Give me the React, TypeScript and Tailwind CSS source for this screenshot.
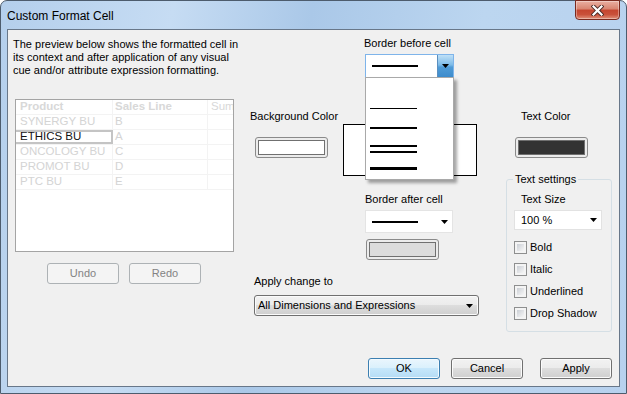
import React from "react";

function Arrow() {
  return (
    <svg width="7" height="4" viewBox="0 0 7 4" className="block">
      <path d="M0 0H7L3.5 4Z" fill="#000" />
    </svg>
  );
}

function Checkbox({ label }: { label: string }) {
  return (
    <div className="flex items-center h-[13px] gap-[3px]">
      <span className="w-[13px] h-[13px] border border-[#8e8f8f] bg-[#f4f4f4] p-[2px] shrink-0">
        <span className="block w-full h-full bg-[linear-gradient(135deg,#cbcfd5,#f6f6f6)]" />
      </span>
      <span className="leading-[13px]">{label}</span>
    </div>
  );
}

function Swatch({ inner }: { inner: string }) {
  return (
    <div className="w-[73px] h-[21px] rounded-[3px] border border-[#8a8a8a] bg-[#ececec] p-[2px]">
      <div className={`w-full h-full border border-[#707070] ${inner}`} />
    </div>
  );
}

const btn =
  "h-[21px] w-[72px] rounded-[3px] border border-[#707070] bg-[linear-gradient(180deg,#f2f2f2_0%,#ebebeb_50%,#dddddd_50%,#cfcfcf_100%)] shadow-[inset_0_0_0_1px_#fbfbfb] flex items-center justify-center text-black";

const rows = [
  ["SYNERGY BU", "B"],
  ["ETHICS BU", "A"],
  ["ONCOLOGY BU", "C"],
  ["PROMOT BU", "D"],
  ["PTC BU", "E"],
];

export default function App() {
  return (
    <div className="w-[627px] h-[394px] overflow-hidden bg-white">
      <div className="w-full h-full flex flex-col border border-[#4d5c6d] rounded-t-[7px] bg-[linear-gradient(100deg,#b4cfec_0%,#c6dcf3_25%,#aac8e8_45%,#bcd6f0_70%,#b7d1ee_100%)] font-['Liberation_Sans',Arial,sans-serif] text-[11px] text-black">
        {/* title bar */}
        <div className="h-[28px] flex items-start shrink-0">
          <div className="pl-[6px] pt-[8px] text-[12px] leading-[14px] text-black">
            Custom Format Cell
          </div>
          <div className="ml-auto mr-[6px] mt-[-1px] w-[45px] h-[20px] rounded-b-[4px] border border-[#7a2a1f] bg-[linear-gradient(180deg,#eab0a2_0%,#d88470_45%,#c5452f_50%,#c9513a_75%,#e0917b_100%)] shadow-[inset_0_0_0_1px_rgba(255,255,255,0.35)] flex items-center justify-center">
            <svg width="13" height="11" viewBox="0 0 13 11">
              <path d="M2.5 1.5L10.5 9.5M10.5 1.5L2.5 9.5" stroke="#4a2a26" strokeWidth="4" strokeLinecap="square" />
              <path d="M2.5 1.5L10.5 9.5M10.5 1.5L2.5 9.5" stroke="#ffffff" strokeWidth="2.2" strokeLinecap="square" />
            </svg>
          </div>
        </div>

        {/* client */}
        <div className="mx-[6px] h-[358px] border border-[#687789] bg-[#f0f0f0] flex flex-col shrink-0">
          <div className="h-[328px] flex shrink-0">
            {/* left column */}
            <div className="w-[232px] flex flex-col pl-[5px] pt-[8px] shrink-0">
              <p className="leading-[13px] whitespace-nowrap">
                The preview below shows the formatted cell in
                <br />
                its context and after application of any visual
                <br />
                cue and/or attribute expression formatting.
              </p>
              <div className="mt-[22px] ml-[2px] w-[219px] h-[153px] border border-[#a4a4a4] bg-white overflow-hidden text-[11.5px]">
                <div className="flex h-[15px] items-center text-[#d8d8d8] font-bold border-b border-[#f3f3f3]">
                  <div className="w-[97px] pl-[4px] shrink-0 border-r border-[#f3f3f3] h-full flex items-center">Product</div>
                  <div className="w-[95px] pl-[2px] shrink-0 border-r border-[#f3f3f3] h-full flex items-center">Sales Line</div>
                  <div className="pl-[3px] font-normal whitespace-nowrap overflow-hidden">Sum</div>
                </div>
                {rows.map(([a, b]) => {
                  const sel = a === "ETHICS BU";
                  return (
                    <div key={a} className="flex h-[15px] items-center border-b border-[#f3f3f3]">
                      <div
                        className={`w-[97px] pl-[4px] shrink-0 h-full flex items-center whitespace-nowrap ${
                          sel
                            ? "text-[#111] border-y-2 border-r-2 border-[#c4c4c4]"
                            : "text-[#d4d4d4] border-r border-[#f3f3f3]"
                        }`}
                      >
                        {a}
                      </div>
                      <div className="w-[95px] pl-[2px] shrink-0 h-full flex items-center text-[#d4d4d4] border-r border-[#f3f3f3]">
                        {b}
                      </div>
                    </div>
                  );
                })}
              </div>
              <div className="flex mt-[11px] ml-[34px] gap-[10px]">
                <div className="h-[21px] w-[72px] rounded-[3px] border border-[#adb2b5] bg-[#f4f4f4] text-[#838383] flex items-center justify-center">Undo</div>
                <div className="h-[21px] w-[72px] rounded-[3px] border border-[#adb2b5] bg-[#f4f4f4] text-[#838383] flex items-center justify-center">Redo</div>
              </div>
            </div>

            {/* center block */}
            <div className="w-[266px] pl-[10px] flex flex-col shrink-0">
              <div className="flex">
                <div className="w-[93px] pt-[80px] flex flex-col shrink-0">
                  <div className="leading-[13px] whitespace-nowrap">Background Color</div>
                  <div className="mt-[14px] ml-[5px]">
                    <Swatch inner="bg-white" />
                  </div>
                </div>
                <div className="w-[134px] pt-[7px] flex flex-col shrink-0">
                  <div className="ml-[21px] leading-[13px] whitespace-nowrap">Border before cell</div>
                  <div className="relative mt-[4px] ml-[22px] w-[89px] h-[24px] border border-[#7eb4ea] bg-white flex items-center">
                    <div className="ml-[6px] w-[46px] h-[2px] bg-black" />
                    <div className="ml-auto w-[16px] h-full border-l border-[#5a8fc0] bg-[linear-gradient(180deg,#bfe0f7_0%,#7dbbe8_45%,#4f9bd6_55%,#3d8ccc_100%)] flex items-center justify-center">
                      <Arrow />
                    </div>
                    <div className="absolute left-[-1px] top-[22px] w-[89px] h-[103px] z-10 border border-[#a9a9a9] bg-white shadow-[3px_3px_3px_rgba(0,0,0,0.35)] flex flex-col pl-[4px]">
                      <div className="mt-[30px] w-[47px] h-[1px] bg-black" />
                      <div className="mt-[18px] w-[47px] h-[2px] bg-black" />
                      <div className="mt-[16px] w-[47px] h-[2px] bg-black" />
                      <div className="mt-[4px] w-[47px] h-[2px] bg-black" />
                      <div className="mt-[14px] w-[47px] h-[3px] bg-black" />
                    </div>
                  </div>
                  <div className="mt-[46px] w-[134px] h-[52px] border border-black bg-white" />
                  <div className="mt-[17px] ml-[22px] leading-[13px] whitespace-nowrap">Border after cell</div>
                  <div className="mt-[4px] ml-[22px] w-[88px] h-[23px] border border-[#e4e4e4] bg-white flex items-center">
                    <div className="ml-[6px] w-[46px] h-[2px] bg-black" />
                    <div className="ml-auto mr-[4px]">
                      <Arrow />
                    </div>
                  </div>
                  <div className="mt-[6px] ml-[23px]">
                    <Swatch inner="bg-[#dcdcdc]" />
                  </div>
                </div>
              </div>
              <div className="mt-[15px] ml-[4px] leading-[13px]">Apply change to</div>
              <div className="mt-[7px] ml-[4px] w-[225px] h-[21px] rounded-[3px] border border-[#707070] bg-[linear-gradient(180deg,#f2f2f2_0%,#ebebeb_50%,#dddddd_50%,#cfcfcf_100%)] shadow-[inset_0_0_0_1px_#fbfbfb] flex items-center pl-[3px] pr-[5px]">
                <span>All Dimensions and Expressions</span>
                <span className="ml-auto">
                  <Arrow />
                </span>
              </div>
            </div>

            {/* right column */}
            <div className="w-[106px] pt-[80px] flex flex-col shrink-0">
              <div className="pl-[15px] leading-[13px]">Text Color</div>
              <div className="mt-[14px] ml-[9px]">
                <Swatch inner="bg-[#333333]" />
              </div>
              <fieldset className="mt-[15px] w-[106px] border border-[#d5dfe5] rounded-[3px] pb-[11px]">
                <legend className="ml-[6px] px-[2px] leading-[13px]">Text settings</legend>
                <div className="mt-[7px] pl-[14px] leading-[13px]">Text Size</div>
                <div className="mt-[4px] ml-[7px] w-[88px] h-[20px] border border-[#e2e2e2] bg-white flex items-center pl-[6px] pr-[4px]">
                  <span>100 %</span>
                  <span className="ml-auto">
                    <Arrow />
                  </span>
                </div>
                <div className="mt-[11px] ml-[7px] flex flex-col gap-[9px]">
                  <Checkbox label="Bold" />
                  <Checkbox label="Italic" />
                  <Checkbox label="Underlined" />
                  <Checkbox label="Drop Shadow" />
                </div>
              </fieldset>
            </div>
          </div>

          {/* bottom buttons */}
          <div className="h-[21px] flex justify-end pr-[7px] shrink-0">
            <div className="h-[21px] w-[72px] rounded-[3px] border border-[#3c7fb1] bg-[linear-gradient(180deg,#eaf6fd_0%,#d9f0fc_50%,#c6e7fb_50%,#b5dcf5_100%)] shadow-[inset_0_0_0_1px_#f3fafe] flex items-center justify-center">
              OK
            </div>
            <div className={`${btn} ml-[11px]`}>Cancel</div>
            <div className={`${btn} ml-[17px]`}>Apply</div>
          </div>
        </div>
      </div>
    </div>
  );
}
